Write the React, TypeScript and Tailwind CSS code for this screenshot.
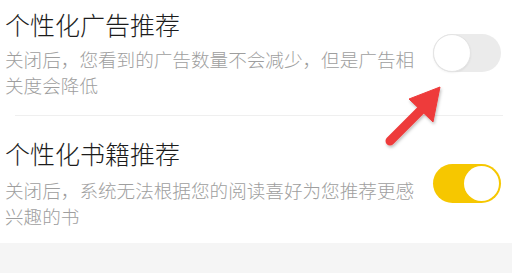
const font = { fontFamily: '"Noto Sans CJK SC", "Noto Sans", sans-serif' };

type Item = { title: string; desc: string; on: boolean };

const items: Item[] = [
  { title: "个性化广告推荐", desc: "关闭后，您看到的广告数量不会减少，但是广告相关度会降低", on: false },
  { title: "个性化书籍推荐", desc: "关闭后，系统无法根据您的阅读喜好为您推荐更感兴趣的书", on: true },
];

function Toggle({ on }: { on: boolean }) {
  if (on) {
    return (
      <div className="flex h-[39px] w-[68px] items-center justify-end rounded-full bg-[#f6c700] p-[2px]">
        <div className="h-[35px] w-[35px] rounded-full bg-white" />
      </div>
    );
  }
  return (
    <div className="flex h-[38px] w-[68px] items-center rounded-full bg-[#ebebeb]">
      <div className="h-[38px] w-[38px] rounded-full border border-[#e4e4e4] bg-white shadow-[0_1px_2px_rgba(0,0,0,0.06)]" />
    </div>
  );
}

export default function App() {
  return (
    <div className="relative h-[273px] w-[512px] overflow-hidden bg-white" style={font}>
      {items.map((item, i) => (
        <div key={item.title}>
          <div className={`flex items-center pl-[5px] pr-[11px] ${i === 0 ? "pt-[8px] pb-[17px]" : "pt-[21px] pb-[14px]"}`}>
            <div className="w-[416px]">
              <div className="text-[25px] font-light leading-[32px] text-[#1c1c1c]">{item.title}</div>
              <div className={`${i === 0 ? "mt-[6px]" : "mt-[8px]"} text-[18.6px] font-light leading-[26px] text-[#9e9e9e]`}>
                {item.desc}
              </div>
            </div>
            <div className="ml-auto">
              <Toggle on={item.on} />
            </div>
          </div>
          {i === 0 && <div className="ml-[15px] mr-[9px] h-px bg-[#efefef]" />}
        </div>
      ))}
      <div className="h-[30px] bg-[#f5f5f5]" />
      <svg className="pointer-events-none absolute left-0 top-0" width="512" height="273">
        <defs>
          <filter id="sh" x="-20%" y="-20%" width="140%" height="140%">
            <feDropShadow dx="1" dy="2" stdDeviation="1.5" floodColor="#000" floodOpacity="0.25" />
          </filter>
        </defs>
        <g filter="url(#sh)" fill="#ee3b3b" stroke="#ee3b3b">
          <line x1="390" y1="141" x2="424" y2="107" strokeWidth="9" strokeLinecap="round" />
          <polygon points="440,87 409,99 433,122" strokeWidth="1" strokeLinejoin="round" />
        </g>
      </svg>
    </div>
  );
}
